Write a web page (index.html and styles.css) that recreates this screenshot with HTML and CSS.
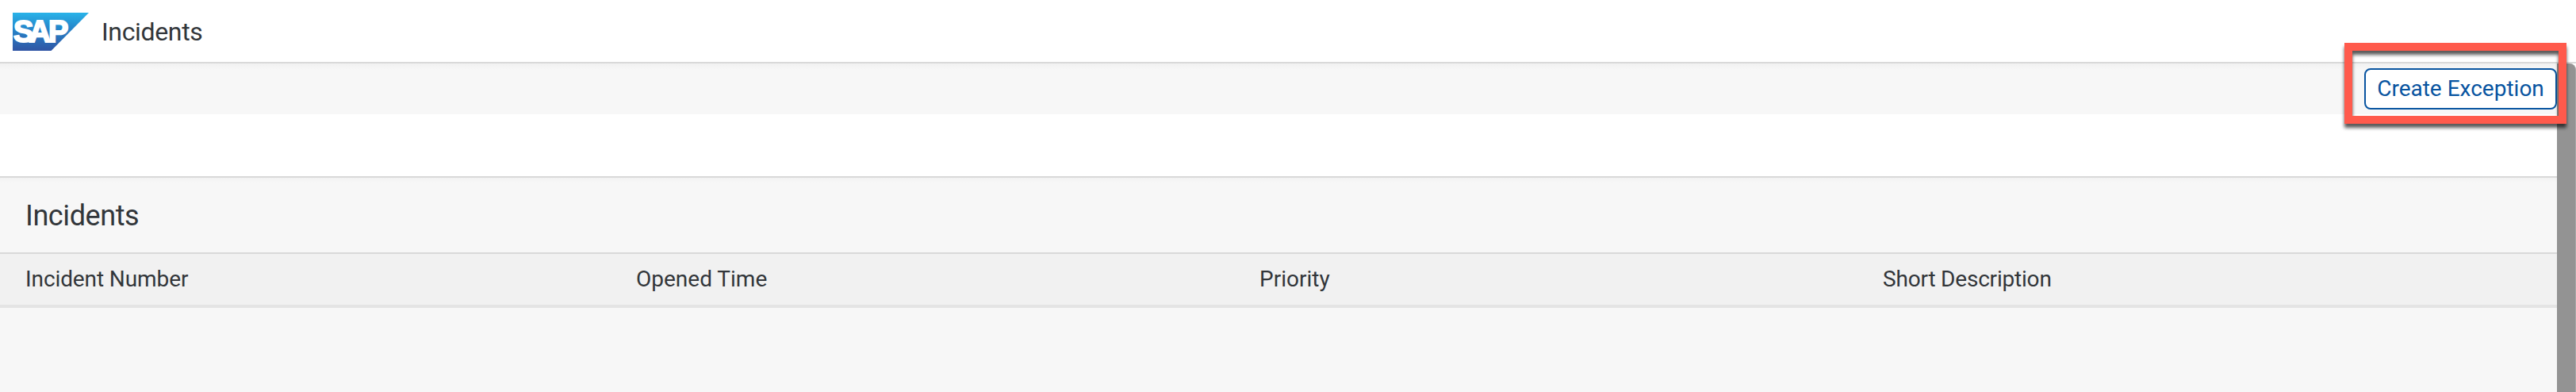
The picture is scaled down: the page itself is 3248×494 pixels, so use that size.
FILE: index.html
```html
<!DOCTYPE html>
<html lang="en">
<head>
<meta charset="utf-8">
<title>Incidents</title>
<link rel="stylesheet" href="styles.css">
</head>
<body>
<header class="shell">
  <svg class="logo" width="96" height="48" viewBox="0 0 96 48" role="img" aria-label="SAP">
    <defs><linearGradient id="blue" x1="0" y1="0" x2="0" y2="1"><stop offset="0" stop-color="#29b3e9"/><stop offset=".4" stop-color="#2587cb"/><stop offset="1" stop-color="#3055a4"/></linearGradient></defs>
    <path d="M0 0H96L48.500 48H0Z" fill="url(#blue)"/>
    <text class="logo-text" x="1 20.500 45" y="37">SAP</text>
  </svg>
  <h1 class="shell-title"><span>Incidents</span></h1>
</header>
<div class="page">
  <main class="content">
    <div class="toolbar">
      <div class="action">
        <button class="create"><span>Create Exception</span></button>
        <div class="highlight"></div>
      </div>
    </div>
    <div class="filters"></div>
    <section class="list">
      <h2 class="list-title"><span>Incidents</span></h2>
      <div class="columns">
        <span class="number">Incident Number</span>
        <span class="opened">Opened Time</span>
        <span class="priority">Priority</span>
        <span class="description">Short Description</span>
      </div>
    </section>
  </main>
  <div class="scrollbar"><div class="thumb"></div></div>
</div>
</body>
</html>
```
FILE: styles.css
```css
* { box-sizing: border-box; }
body {
  margin: 0;
  height: 494px;
  display: flex;
  flex-direction: column;
  overflow: hidden;
  background: #fff;
  color: #32363a;
  font-family: Roboto, "Liberation Sans", sans-serif;
}
h1, h2 { margin: 0; font-weight: 400; }
.shell {
  height: 80px;
  flex: none;
  display: flex;
  align-items: center;
  gap: 16px;
  padding-left: 16px;
  border-bottom: 2px solid #d9d9d9;
}
.logo { display: block; margin-top: 2px; }
.logo-text {
  font: 700 38px "Liberation Sans", sans-serif;
  fill: #fff;
  stroke: #fff;
  stroke-width: 2px;
}
.shell-title { font-size: 32px; line-height: 40px; letter-spacing: -.35px; padding-top: 2px; }
.page { flex: 1; display: flex; min-height: 0; }
.content { flex: 1; display: flex; flex-direction: column; }
.toolbar {
  height: 64px;
  display: flex;
  justify-content: flex-end;
  align-items: flex-start;
  padding-top: 6px;
  background: linear-gradient(#f1f1f1, #f7f7f7 8px);
}
.action { position: relative; }
.create {
  display: block;
  width: 243px;
  height: 52px;
  padding: 0;
  border: 2px solid #0854a0;
  border-radius: 8px;
  background: #fff;
  color: #0854a0;
  font: 28px/40px Roboto, "Liberation Sans", sans-serif;
}
.highlight {
  position: absolute;
  z-index: 2;
  left: -25px;
  top: -32px;
  width: 280px;
  height: 102px;
  border: 10px solid #ff5a4c;
  filter: drop-shadow(0 5px 2px rgba(0, 0, 0, .65));
}
.filters { height: 78px; background: #fff; }
.list {
  flex: 1;
  border-top: 2px solid #d9d9d9;
  background: linear-gradient(#f2f2f2, #f7f7f7 6px);
}
.list-title {
  height: 94px;
  padding: 28px 0 0 32px;
  font-size: 36px;
  line-height: 40px;
  letter-spacing: -.4px;
}
.columns {
  height: 70px;
  display: grid;
  grid-template-columns: 770px 786px 786px 1fr;
  align-items: center;
  padding-left: 32px;
  border-top: 2px solid #d9d9d9;
  border-bottom: 4px solid #e4e4e4;
  background: #f1f1f1;
  font-size: 28px;
  line-height: 40px;
}
.number { letter-spacing: -.1px; }
.description { letter-spacing: -.2px; }
.scrollbar { width: 24px; background: #fff; }
.thumb {
  height: 100%;
  border-right: 1px solid #a8a8a8;
  border-top-right-radius: 8px;
  background: #939393;
}
```
